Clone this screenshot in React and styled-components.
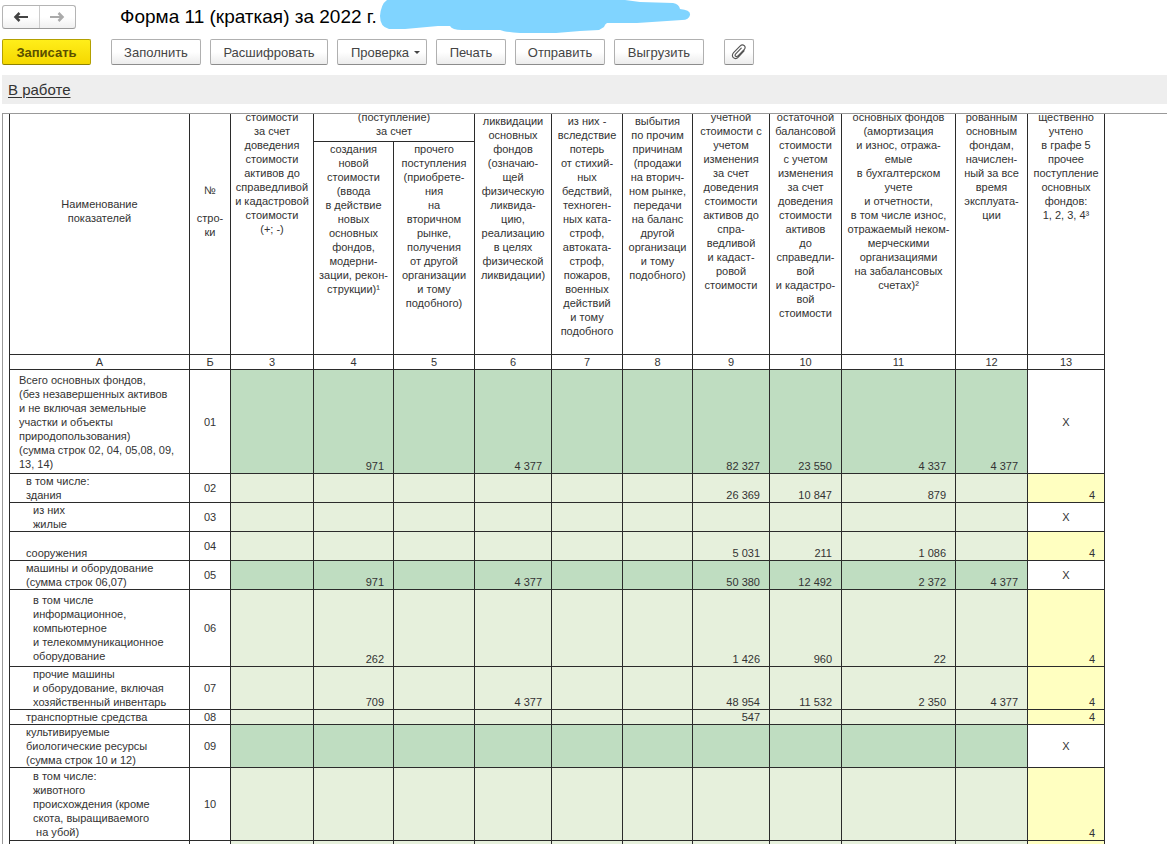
import React from "react";
import styled, { createGlobalStyle } from "styled-components";

const GlobalStyle = createGlobalStyle`
  * { box-sizing: border-box; }
  body {
    margin: 0;
    background: #fff;
    color: #333;
    font-family: "Liberation Sans", Arial, sans-serif;
  }
`;

const Page = styled.div`
  display: flex;
  flex-direction: column;
  height: 100vh;
  padding: 0 0 1px 2px;
  overflow: hidden;
`;

const TitleBar = styled.header`
  display: flex;
  align-items: center;
  height: 34px;
  flex: none;
`;

const NavGroup = styled.nav`
  display: flex;
  width: 74px;
  height: 24px;
  margin-right: 44px;
  border: 1px solid #b4b4b4;
  border-bottom-color: #999;
  border-radius: 3px;
  background: linear-gradient(#fff 50%, #f0f0f0);
`;

const NavButton = styled.button`
  flex: 1;
  display: flex;
  align-items: center;
  justify-content: center;
  padding: 0;
  border: 0;
  background: none;
  color: ${(p) => (p.disabled ? "#aaa" : "#444")};
  & + & { border-left: 1px solid #ccc; }
`;

const Title = styled.h1`
  margin: 0;
  font-size: 19px;
  line-height: 24px;
  font-weight: 400;
  color: #000;
  white-space: nowrap;
`;

const Scribble = styled.svg`
  display: block;
  align-self: flex-start;
  flex: none;
  margin-left: 3px;
  overflow: visible;
`;

const Toolbar = styled.div`
  display: flex;
  gap: 9px;
  flex: none;
  padding: 5px 0 10px;
`;

const ToolGroup = styled.div`
  display: flex;
  gap: 9px;
  margin: 0 11px;
`;

const Button = styled.button`
  display: flex;
  align-items: center;
  justify-content: center;
  gap: 5px;
  width: ${(p) => p.$width}px;
  height: 26px;
  padding: 0 0 0 ${(p) => (p.$menu ? 7 : 0)}px;
  border: 1px solid ${(p) => (p.$primary ? "#b3a000" : "#b0b0b0")};
  border-bottom-color: ${(p) => (p.$primary ? "#8f8200" : "#8c8c8c")};
  border-radius: 2px;
  background: ${(p) =>
    p.$primary ? "linear-gradient(#ffee1a, #f5d800)" : "linear-gradient(#fff 50%, #ececec)"};
  color: ${(p) => (p.$primary ? "#5c5000" : "#444")};
  font-family: inherit;
  font-size: 13px;
  font-weight: ${(p) => (p.$primary ? 700 : 400)};
  white-space: nowrap;
`;

const Caret = styled.span`
  border: 3px solid transparent;
  border-top-color: #444;
  border-bottom: 0;
`;

const StatusBar = styled.div`
  flex: none;
  height: 29px;
  padding: 0 6px;
  background: #eee;
  line-height: 29px;
`;

const StatusLink = styled.a`
  color: #333;
  font-size: 15px;
  text-underline-offset: 2px;
`;

const Sheet = styled.main`
  flex: 1;
  min-height: 0;
  margin-top: 9px;
  padding-left: 6px;
  border: 1px solid #999;
  border-width: 1px 0 0 1px;
  overflow: hidden;
`;

const Table = styled.table`
  table-layout: fixed;
  width: 1096px;
  margin-top: -4px;
  border-left: 1px solid #2b2b2b;
  border-collapse: separate;
  border-spacing: 0;
  font-size: 11px;
  line-height: 14px;
`;

const Cell = styled.td`
  height: ${(p) => p.$height}px;
  padding: 0;
  border: 1px solid #2b2b2b;
  border-width: 0 1px 1px 0;
  white-space: pre;
`;

const HeadCell = styled(Cell)`
  padding-top: ${(p) => (p.$low ? 4 : 0)}px;
  padding-bottom: ${(p) => (p.$middle ? 42 : 0)}px;
  font-weight: 400;
  text-align: center;
  vertical-align: ${(p) => (p.$middle ? "middle" : "top")};
`;

const NameCell = styled(Cell)`
  padding-left: ${(p) => 9 + p.$level * 7}px;
  font-weight: 400;
  text-align: left;
  vertical-align: middle;
`;

const CenterCell = styled(Cell)`
  text-align: center;
  vertical-align: middle;
`;

const fills = { total: "#bfddc1", plain: "#e6f0dc", code: "#ffffc1" };

const NumberCell = styled(Cell)`
  padding-right: 9px;
  background: ${(p) => fills[p.$fill]};
  text-align: right;
  vertical-align: bottom;
`;

const columns = [180, 41, 83, 80, 81, 77, 71, 70, 77, 72, 114, 72, 77];
const labels = ["А", "Б", "3", "4", "5", "6", "7", "8", "9", "10", "11", "12", "13"];

const headings = {
  c3: "стоимости\nза счет\nдоведения\nстоимости\nактивов до\nсправедливой\nи кадастровой\nстоимости\n(+; -)",
  c4: "создания\nновой\nстоимости\n(ввода\nв действие\nновых\nосновных\nфондов,\nмодерни-\nзации, рекон-\nструкции)¹",
  c5: "прочего\nпоступления\n(приобрете-\nния\nна\nвторичном\nрынке,\nполучения\nот другой\nорганизации\nи тому\nподобного)",
  c6: "ликвидации\nосновных\nфондов\n(означаю-\nщей\nфизическую\nликвида-\nцию,\nреализацию\nв целях\nфизической\nликвидации)",
  c7: "из них -\nвследствие\nпотерь\nот стихий-\nных\nбедствий,\nтехноген-\nных ката-\nстроф,\nавтоката-\nстроф,\nпожаров,\nвоенных\nдействий\nи тому\nподобного",
  c8: "выбытия\nпо прочим\nпричинам\n(продажи\nна вторич-\nном рынке,\nпередачи\nна баланс\nдругой\nорганизаци\nи тому\nподобного)",
  c9: "учетной\nстоимости с\nучетом\nизменения\nза счет\nдоведения\nстоимости\nактивов до\nспра-\nведливой\nи кадаст-\nровой\nстоимости",
  c10: "остаточной\nбалансовой\nстоимости\nс учетом\nизменения\nза счет\nдоведения\nстоимости\nактивов\nдо\nсправедли-\nвой\nи кадастро-\nвой\nстоимости",
  c11: "основных фондов\n(амортизация\nи износ, отража-\nемые\nв бухгалтерском\nучете\nи отчетности,\nв том числе износ,\nотражаемый неком-\nмерческими\nорганизациями\nна забалансовых\nсчетах)²",
  c12: "рованным\nосновным\nфондам,\nначислен-\nный за все\nвремя\nэксплуата-\nции",
  c13: "щественно\nучтено\nв графе 5\nпрочее\nпоступление\nосновных\nфондов:\n1, 2, 3, 4³",
};

const none = ["", "", "", "", "", "", "", "", "", ""];

const rows = [
  {
    code: "01", height: 104, level: 0, total: true, last: "X",
    name: "Всего основных фондов,\n(без незавершенных активов\nи не включая земельные\nучастки и объекты\nприродопользования)\n(сумма строк 02, 04, 05,08, 09,\n13, 14)",
    values: ["", "971", "", "4 377", "", "", "82 327", "23 550", "4 337", "4 377"],
  },
  { code: "02", height: 29, level: 1, last: "4", name: "в том числе:\nздания", values: ["", "", "", "", "", "", "26 369", "10 847", "879", ""] },
  { code: "03", height: 29, level: 2, last: "X", name: "из них\nжилые", values: none },
  { code: "04", height: 29, level: 1, last: "4", name: "\nсооружения", values: ["", "", "", "", "", "", "5 031", "211", "1 086", ""] },
  { code: "05", height: 29, level: 1, total: true, last: "X", name: "машины и оборудование\n(сумма строк 06,07)", values: ["", "971", "", "4 377", "", "", "50 380", "12 492", "2 372", "4 377"] },
  { code: "06", height: 77, level: 2, last: "4", name: "в том числе\nинформационное,\nкомпьютерное\nи телекоммуникационное\nоборудование", values: ["", "262", "", "", "", "", "1 426", "960", "22", ""] },
  { code: "07", height: 43, level: 2, last: "4", name: "прочие машины\nи оборудование, включая\nхозяйственный инвентарь", values: ["", "709", "", "4 377", "", "", "48 954", "11 532", "2 350", "4 377"] },
  { code: "08", height: 15, level: 1, last: "4", name: "транспортные средства", values: ["", "", "", "", "", "", "547", "", "", ""] },
  { code: "09", height: 43, level: 1, total: true, last: "X", name: "культивируемые\nбиологические ресурсы\n(сумма строк 10 и 12)", values: none },
  { code: "10", height: 73, level: 2, last: "4", name: "в том числе:\nживотного\nпроисхождения (кроме\nскота, выращиваемого\n на убой)", values: none },
  { code: "", height: 43, level: 2, last: "", name: "", values: none },
];

function Arrow({ back }) {
  return (
    <svg width="16" height="12" viewBox="0 0 16 12" aria-hidden="true">
      <g transform={back ? undefined : "matrix(-1 0 0 1 16 0)"} fill="none" stroke="currentColor" strokeWidth="2">
        <path d="M3 6h12" />
        <path d="M6.500 2 2.500 6l4 4" strokeWidth="2.500" />
      </g>
    </svg>
  );
}

function ClipIcon() {
  return (
    <svg width="18" height="18" viewBox="0 0 16 16" fill="none" stroke="#555" strokeWidth="1" strokeLinecap="round" aria-hidden="true">
      <path d="M12.5 7 7.6 12.3C6.2 13.8 4.2 14.1 3 13 1.7 11.800 1.900 9.900 3.200 8.500L8.900 2.700C10 1.600 11.700 1.400 12.700 2.400 13.700 3.400 13.500 4.900 12.500 6L7.100 11.500C6.400 12.200 5.400 12.300 4.900 11.700 4.300 11.100 4.500 10.300 5.100 9.600L10 4.600" />
    </svg>
  );
}

export default function App() {
  return (
    <Page>
      <GlobalStyle />
      <TitleBar>
        <NavGroup aria-label="История">
          <NavButton aria-label="Назад"><Arrow back /></NavButton>
          <NavButton aria-label="Вперед" disabled><Arrow /></NavButton>
        </NavGroup>
        <Title>Форма 11 (краткая) за 2022 г.</Title>
        <Scribble width="312" height="34" viewBox="0 0 312 34" aria-hidden="true">
          <path
            fill="#80d4ff"
            d="M7 0H245L260 2 293 3Q299 4 300 9 311 10 310 15 309 20 302 20L257 23 227 23Q225 24 224 27L219 30 200 31 176 33 140 33Q125 32 120 30L82 30Q72 30 70 26L58 26 25 29H9Q0 27 0 16 1 4 7 0Z"
          />
        </Scribble>
      </TitleBar>
      <Toolbar>
        <Button $primary $width={89}>Записать</Button>
        <ToolGroup>
          <Button $width={90}>Заполнить</Button>
          <Button $width={118}>Расшифровать</Button>
          <Button $width={90} $menu aria-haspopup="menu">Проверка<Caret /></Button>
          <Button $width={70}>Печать</Button>
          <Button $width={90}>Отправить</Button>
          <Button $width={90}>Выгрузить</Button>
        </ToolGroup>
        <Button $width={30} aria-label="Прикрепить файл"><ClipIcon /></Button>
      </Toolbar>
      <StatusBar><StatusLink href="#status">В работе</StatusLink></StatusBar>
      <Sheet>
        <Table>
          <colgroup>
            {columns.map((w, i) => <col key={i} width={w} />)}
          </colgroup>
          <thead>
            <tr>
              <HeadCell as="th" rowSpan={2} $middle>{"Наименование\nпоказателей"}</HeadCell>
              <HeadCell as="th" rowSpan={2} $middle>{"№\n\nстро-\nки"}</HeadCell>
              <HeadCell as="th" rowSpan={2}>{headings.c3}</HeadCell>
              <HeadCell as="th" colSpan={2} $height={32}>{"(поступление)\nза счет"}</HeadCell>
              <HeadCell as="th" rowSpan={2} $low>{headings.c6}</HeadCell>
              <HeadCell as="th" rowSpan={2} $low>{headings.c7}</HeadCell>
              <HeadCell as="th" rowSpan={2} $low>{headings.c8}</HeadCell>
              <HeadCell as="th" rowSpan={2}>{headings.c9}</HeadCell>
              <HeadCell as="th" rowSpan={2}>{headings.c10}</HeadCell>
              <HeadCell as="th" rowSpan={2}>{headings.c11}</HeadCell>
              <HeadCell as="th" rowSpan={2}>{headings.c12}</HeadCell>
              <HeadCell as="th" rowSpan={2}>{headings.c13}</HeadCell>
            </tr>
            <tr>
              <HeadCell as="th" $height={213}>{headings.c4}</HeadCell>
              <HeadCell as="th">{headings.c5}</HeadCell>
            </tr>
            <tr>
              {labels.map((l) => <HeadCell as="th" key={l} $height={15}>{l}</HeadCell>)}
            </tr>
          </thead>
          <tbody>
            {rows.map((r) => (
              <tr key={r.code}>
                <NameCell as="th" scope="row" $level={r.level} $height={r.height}>{r.name}</NameCell>
                <CenterCell>{r.code}</CenterCell>
                {r.values.map((v, i) => (
                  <NumberCell key={i} $fill={r.total ? "total" : "plain"}>{v}</NumberCell>
                ))}
                {r.last === "X"
                  ? <CenterCell>X</CenterCell>
                  : <NumberCell $fill="code">{r.last}</NumberCell>}
              </tr>
            ))}
          </tbody>
        </Table>
      </Sheet>
    </Page>
  );
}
